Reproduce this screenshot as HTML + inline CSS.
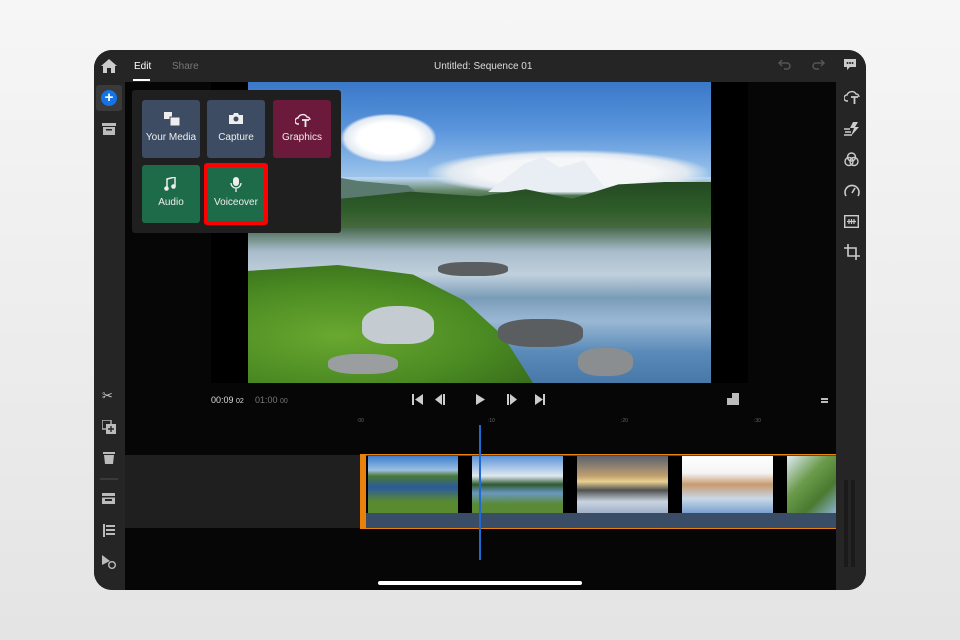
<!DOCTYPE html>
<html><head><style>
*{margin:0;padding:0;box-sizing:border-box}
body{width:960px;height:640px;overflow:hidden;background:linear-gradient(#f6f6f6,#e4e4e4);font-family:"Liberation Sans",sans-serif;position:relative}
.dev{position:absolute;left:94px;top:50px;width:772px;height:540px;border-radius:18px;background:#060606;overflow:hidden}
.top{position:absolute;left:0;top:0;width:772px;height:32px;background:#252525}
.ls{position:absolute;left:0;top:32px;width:31px;height:508px;background:#252525}
.rs{position:absolute;right:0;top:32px;width:30px;height:508px;background:#252525}
.ab{position:absolute;color:#ccc;font-size:11px}
.t{position:absolute;color:#ddd;font-size:10px}
.tile{position:absolute;width:58px;height:58px;border-radius:3px;color:#eee;font-size:10px;text-align:center;padding-top:32px}
.tile svg{position:absolute;left:22px;top:12px}
svg.i{position:absolute}
.p{position:absolute}
</style></head><body>
<div class="dev">
<div class="top"></div>
<div class="ls"></div>
<div class="rs"></div>
<svg class="i" style="left:7px;top:9px" width="16" height="14" viewBox="0 0 16 14"><path d="M8 0L0 7h2v7h4V9h4v5h4V7h2z" fill="#ccc"/></svg>
<div class="t" style="left:40px;top:11px;color:#fff">Edit</div>
<div style="position:absolute;left:39px;top:29px;width:17px;height:2px;background:#fff"></div>
<div class="t" style="left:78px;top:11px;color:#777">Share</div>
<div class="t" style="left:340px;top:11px;color:#ddd">Untitled: Sequence 01</div>
<svg class="i" style="left:684px;top:9px" width="14" height="12" viewBox="0 0 14 12"><path d="M4 1L1 4l3 3M1 4h8a3 3 0 010 6H6" stroke="#555" stroke-width="1.5" fill="none"/></svg>
<svg class="i" style="left:717px;top:9px" width="14" height="12" viewBox="0 0 14 12"><path d="M10 1l3 3-3 3M13 4H5a3 3 0 000 6h3" stroke="#555" stroke-width="1.5" fill="none"/></svg>
<svg class="i" style="left:749px;top:8px" width="14" height="13" viewBox="0 0 14 13"><path d="M1 1h12v8H7l-3 3V9H1z" fill="#ccc"/><circle cx="4.5" cy="5" r="1" fill="#252525"/><circle cx="7" cy="5" r="1" fill="#252525"/><circle cx="9.5" cy="5" r="1" fill="#252525"/></svg>
<div style="position:absolute;left:2px;top:35px;width:26px;height:26px;background:#3a3a3a;border-radius:3px"></div>
<div style="position:absolute;left:7px;top:40px;width:16px;height:16px;border-radius:50%;background:#1473e6;color:#fff;font-size:15px;line-height:15px;text-align:center;font-weight:bold">+</div>
<svg class="i" style="left:8px;top:73px" width="14" height="12"><rect x="0" y="0" width="14" height="3" fill="#bbb"/><rect x="1" y="4" width="12" height="8" fill="#bbb"/><rect x="4" y="6" width="6" height="1.5" fill="#252525"/></svg>
<div class="ab" style="left:8px;top:338px;font-size:13px">✂</div>
<svg class="i" style="left:8px;top:370px" width="14" height="14"><rect x="0" y="0" width="9" height="9" fill="none" stroke="#bbb" stroke-width="1.4"/><rect x="4" y="4" width="10" height="10" fill="#bbb"/><path d="M9 6v6M6 9h6" stroke="#252525" stroke-width="1.4"/></svg>
<svg class="i" style="left:9px;top:401px" width="12" height="13"><rect x="0" y="1" width="12" height="2" fill="#bbb"/><path d="M1 4h10l-1 9H2z" fill="#bbb"/></svg>
<div style="position:absolute;left:6px;top:428px;width:18px;height:2px;background:#3a3a3a"></div>
<svg class="i" style="left:8px;top:443px" width="13" height="11"><rect width="13" height="11" fill="#bbb"/><rect x="0" y="3" width="13" height="1.5" fill="#252525"/><rect x="3" y="6" width="7" height="2" fill="#252525"/></svg>
<svg class="i" style="left:9px;top:474px" width="12" height="13"><rect width="2" height="13" fill="#bbb"/><rect x="3" y="1" width="9" height="2" fill="#bbb"/><rect x="3" y="5" width="9" height="2" fill="#bbb"/><rect x="3" y="9" width="9" height="2" fill="#bbb"/></svg>
<svg class="i" style="left:8px;top:505px" width="14" height="14"><path d="M0 0l8 6-8 4z" fill="#bbb"/><circle cx="10" cy="10" r="3.3" fill="none" stroke="#bbb" stroke-width="1.4"/></svg>
<svg class="i" style="left:750px;top:39px" width="16" height="16" viewBox="0 0 16 16"><path d="M4 12H3a3 3 0 010-6 5 5 0 019-1 3 3 0 013 3" stroke="#ccc" stroke-width="1.4" fill="none"/><path d="M7 8h7M10.5 8v7" stroke="#ccc" stroke-width="1.8"/></svg>
<svg class="i" style="left:750px;top:72px" width="16" height="14" viewBox="0 0 16 14"><path d="M9 0L6 6h4l-3 8 8-9h-4l3-5z" fill="#ccc"/><path d="M0 7h6M1 10h6M0 13h8" stroke="#ccc" stroke-width="1.4"/></svg>
<svg class="i" style="left:750px;top:102px" width="15" height="15" viewBox="0 0 15 15"><g fill="none" stroke="#ccc" stroke-width="1.4"><circle cx="7.5" cy="5" r="4"/><circle cx="5" cy="9.5" r="4"/><circle cx="10" cy="9.5" r="4"/></g></svg>
<svg class="i" style="left:750px;top:133px" width="16" height="14" viewBox="0 0 16 14"><path d="M2 13A7 7 0 1114 13" stroke="#ccc" stroke-width="1.6" fill="none"/><path d="M8 10l3-5" stroke="#ccc" stroke-width="1.6"/></svg>
<svg class="i" style="left:750px;top:165px" width="15" height="13"><rect x="0.7" y="0.7" width="13.6" height="11.6" fill="none" stroke="#ccc" stroke-width="1.4"/><path d="M3 6.5h9M5 4v5M7.5 4v5M10 4v5" stroke="#ccc" stroke-width="1.2"/></svg>
<svg class="i" style="left:750px;top:194px" width="16" height="16" viewBox="0 0 16 16"><path d="M4 0v12h12M0 4h12v12" stroke="#ccc" stroke-width="1.6" fill="none"/></svg>
<!-- preview -->
<div style="position:absolute;left:117px;top:32px;width:537px;height:301px;background:#000"></div>
<div style="position:absolute;left:154px;top:32px;width:463px;height:301px;overflow:hidden;background:linear-gradient(180deg,#3a78c8 0%,#5a95dc 15%,#8ab8e8 28%,#b8d4ee 32%,#6a8a70 36%,#2e5a2c 40%,#3a6a30 47%,#9ab0b8 49%,#b8c8d4 55%,#7a9ab4 62%,#8ab0d0 72%,#5a8ab8 85%,#4a7aa8 100%)">
<div class="p" style="left:0;top:0;width:463px;height:95px;background:linear-gradient(180deg,#3a78c8,#5a95dc 50%,#9cc4ec)"></div>
<div class="p" style="left:93px;top:32px;width:95px;height:48px;border-radius:30px;background:radial-gradient(ellipse,#fff 45%,#dfe8f2 65%,transparent 72%)"></div>
<div class="p" style="left:180px;top:68px;width:280px;height:45px;background:radial-gradient(ellipse,#f4f6f8 45%,#e0e8f0 60%,transparent 72%)"></div>
<div class="p" style="left:240px;top:75px;width:120px;height:35px;background:#e8eef4;clip-path:polygon(0 100%,30% 20%,45% 0,60% 30%,80% 10%,100% 100%)"></div>
<div class="p" style="left:0;top:90px;width:200px;height:45px;background:#5a7a70;clip-path:polygon(0 30%,30% 0,55% 20%,80% 30%,100% 100%,0 100%)"></div>
<div class="p" style="left:0;top:100px;width:463px;height:48px;background:linear-gradient(180deg,#244a22,#2f5d2a 60%,#4a6a40);clip-path:polygon(0 30%,10% 10%,20% 35%,35% 20%,50% 30%,60% 15%,70% 35%,80% 5%,90% 0,100% 0,100% 100%,0 100%)"></div>
<div class="p" style="left:0;top:146px;width:463px;height:155px;background:linear-gradient(180deg,#4a6a50,#a8bccb 15%,#c0d0dc 30%,#7a9cb8 45%,#9ab8d4 60%,#5a8ab8 80%,#4878a8)"></div>
<div class="p" style="left:0;top:183px;width:300px;height:118px;background:radial-gradient(ellipse at 30% 60%,#6aa830,#4a8a22 50%,#2e5c18);clip-path:polygon(0 5%,30% 0,55% 8%,72% 30%,85% 60%,95% 100%,0 100%)"></div>
<div class="p" style="left:114px;top:224px;width:72px;height:38px;border-radius:45% 45% 35% 35%;background:#c4ccd2"></div>
<div class="p" style="left:250px;top:237px;width:85px;height:28px;border-radius:40%;background:#5a5e60"></div>
<div class="p" style="left:330px;top:266px;width:55px;height:28px;border-radius:40%;background:#8a8e90"></div>
<div class="p" style="left:80px;top:272px;width:70px;height:20px;border-radius:40%;background:#9a9ea0"></div>
<div class="p" style="left:190px;top:180px;width:70px;height:14px;border-radius:40%;background:#5a5e60"></div>
</div>
<!-- menu -->
<div style="position:absolute;left:38px;top:40px;width:209px;height:143px;background:#1f1f1f;border-radius:3px"></div>
<div class="tile" style="left:48px;top:50px;background:#3d4c63">Your Media<svg width="16" height="14"><rect x="0" y="0" width="8" height="7" fill="#eee"/><rect x="6" y="5" width="10" height="9" fill="#eee" stroke="#3d4c63"/></svg></div>
<div class="tile" style="left:113px;top:50px;background:#3d4c63">Capture<svg width="14" height="12"><path d="M0 3h4l1-2h4l1 2h4v9H0z" fill="#eee"/><circle cx="7" cy="7" r="2.5" fill="#3d4c63"/></svg></div>
<div class="tile" style="left:179px;top:50px;background:#6b1a3b">Graphics<svg width="16" height="16" viewBox="0 0 16 16"><path d="M4 12H3a3 3 0 010-6 5 5 0 019-1 3 3 0 013 3" stroke="#eee" stroke-width="1.4" fill="none"/><path d="M7 8h7M10.5 8v7" stroke="#eee" stroke-width="1.8"/></svg></div>
<div class="tile" style="left:48px;top:115px;background:#1e6b4a">Audio<svg width="12" height="14"><path d="M3 11V2l8-2v9" stroke="#eee" stroke-width="1.5" fill="none"/><circle cx="2.5" cy="11.5" r="2.3" fill="#eee"/><circle cx="9.5" cy="9.5" r="2.3" fill="#eee"/></svg></div>
<div class="tile" style="left:110px;top:113px;width:64px;height:62px;background:#1e6b4a;border:4px solid #f00;padding-top:30px">Voiceover<svg style="left:22px;top:10px" width="12" height="15"><rect x="3" y="0" width="6" height="9" rx="3" fill="#eee"/><path d="M1 6a5 5 0 0010 0M6 11v4" stroke="#eee" stroke-width="1.3" fill="none"/></svg></div>
<!-- transport -->
<div class="t" style="left:117px;top:345px;font-size:9px;color:#ddd">00:09 <span style="font-size:7px">02</span></div>
<div class="t" style="left:161px;top:345px;font-size:9px;color:#777">01:00 <span style="font-size:7px">00</span></div>
<svg class="i" style="left:318px;top:343px" width="140" height="13" viewBox="0 0 140 13"><g fill="#ccc"><rect x="0" y="1" width="2" height="11"/><path d="M11 1v11L3 6.5z"/><rect x="31" y="1" width="2" height="11"/><path d="M30 1v11l-7-5.5z"/><path d="M64 1v11l9-5.5z"/><rect x="95" y="1" width="2" height="11"/><path d="M98 1v11l7-5.5z"/><path d="M123 1v11l8-5.5z"/><rect x="131" y="1" width="2" height="11"/></g></svg>
<svg class="i" style="left:633px;top:343px" width="12" height="12"><rect x="0" y="5" width="8" height="7" fill="#bbb"/><rect x="5" y="0" width="7" height="12" fill="#bbb"/></svg>
<div style="position:absolute;left:727px;top:348px;width:7px;height:2px;background:#bbb;box-shadow:0 3px 0 #bbb"></div>
<div class="t" style="left:263px;top:368px;font-size:5px;color:#666">:00</div>
<div class="t" style="left:394px;top:368px;font-size:5px;color:#666">:10</div>
<div class="t" style="left:527px;top:368px;font-size:5px;color:#666">:20</div>
<div class="t" style="left:660px;top:368px;font-size:5px;color:#666">:30</div>
<!-- track -->
<div style="position:absolute;left:31px;top:405px;width:236px;height:73px;background:#1f1f1f"></div>
<div style="position:absolute;left:266px;top:404px;width:476px;height:75px;border:1.5px solid #e8820c;border-left:6px solid #e8820c;border-right:none;background:#3a4d66"></div>
<div style="position:absolute;left:272px;top:406px;width:470px;height:57px;background:#000"></div>
<div style="position:absolute;left:274px;top:406px;width:90px;height:57px;background:linear-gradient(#3d7fd0,#9cc0e0 25%,#4a7a35 35%,#2a5a9a 55%,#5a8a30 80%)"></div>
<div style="position:absolute;left:378px;top:406px;width:91px;height:57px;background:linear-gradient(#5a93d8,#e0e8f0 35%,#2e5a32 50%,#6a98c0 65%,#5a8a35 85%)"></div>
<div style="position:absolute;left:483px;top:406px;width:91px;height:57px;background:linear-gradient(#5a6070,#c0a070 35%,#e8d090 45%,#505050 60%,#c8d4e0 80%,#a0b0c8)"></div>
<div style="position:absolute;left:588px;top:406px;width:91px;height:57px;background:linear-gradient(#fff,#f4f4f4 30%,#c89a70 50%,#c8d8e8 75%,#7aa0d0)"></div>
<div style="position:absolute;left:693px;top:406px;width:49px;height:57px;background:linear-gradient(135deg,#e0eaf4,#6a9a4a 40%,#4a7a30 70%,#8ab0d0)"></div>
<div style="position:absolute;left:385px;top:375px;width:2px;height:135px;background:#1e6ad0"></div>
<div style="position:absolute;left:750px;top:430px;width:4px;height:87px;background:#1a1a1a"></div>
<div style="position:absolute;left:757px;top:430px;width:4px;height:87px;background:#1a1a1a"></div>
<div style="position:absolute;left:284px;top:531px;width:204px;height:4px;border-radius:2px;background:#fff"></div>
</div>
</body></html>
